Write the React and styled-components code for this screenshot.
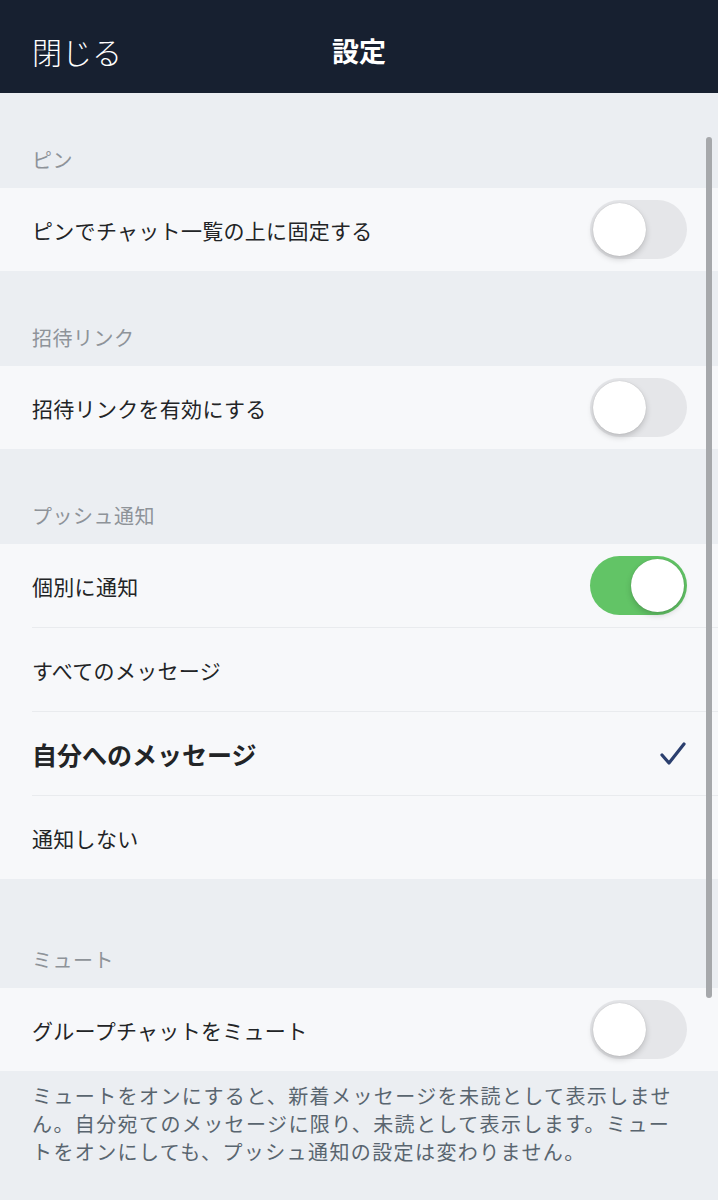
import React, { useState } from 'react';
import styled, { createGlobalStyle } from 'styled-components';

const GlobalStyle = createGlobalStyle`
    html, body {
        margin: 0;
        padding: 0;
        background: #ebeef2;
    }
    body {
        font-family: "Noto Sans CJK JP", "Noto Sans", sans-serif;
        -webkit-font-smoothing: antialiased;
    }
`;

export const Page = styled.div`
    position: relative;
    width: 718px;
    min-height: 1200px;
    background: #ebeef2;
    overflow: hidden;
`;

export const Header = styled.header`
    display: grid;
    grid-template-columns: 1fr auto 1fr;
    align-items: center;
    height: 93px;
    box-sizing: border-box;
    padding: 8px 32px 0;
    background: #172030;
    color: #ffffff;
`;

export const CloseButton = styled.button`
    justify-self: start;
    padding: 0;
    border: none;
    background: none;
    color: #ffffff;
    font-family: inherit;
    font-size: 30px;
    font-weight: 300;
    cursor: pointer;
`;

export const Title = styled.h1`
    margin: 0;
    font-size: 27px;
    font-weight: 700;
`;

export const SectionHeader = styled.div`
    display: flex;
    align-items: flex-end;
    height: ${(p) => p.height || 95}px;
    box-sizing: border-box;
    padding: 0 32px 14px;
    color: #8e9399;
    font-size: 20px;
    line-height: 28px;
    letter-spacing: 0.5px;
`;

export const Group = styled.div`
    background: #f7f8fa;
`;

export const Row = styled.div`
    display: flex;
    align-items: center;
    justify-content: space-between;
    height: 83px;
    margin-left: 32px;
    padding-right: 31px;
    border-top: ${(p) => (p.divided ? '1px solid #e9ebee' : 'none')};
`;

export const Label = styled.span`
    color: #222426;
    font-size: ${(p) => (p.selected ? 25 : 21)}px;
    font-weight: ${(p) => (p.selected ? 700 : 400)};
    letter-spacing: ${(p) => (p.selected ? 0 : 0.3)}px;
`;

export const Track = styled.button`
    position: relative;
    width: 97px;
    height: 59px;
    padding: 0;
    border: none;
    border-radius: 30px;
    background: ${(p) => (p.on ? '#62c466' : '#e5e6e9')};
    cursor: pointer;
`;

export const Knob = styled.span`
    position: absolute;
    top: 3px;
    left: ${(p) => (p.on ? 41 : 3)}px;
    width: 53px;
    height: 53px;
    border-radius: 50%;
    background: #ffffff;
    box-shadow: 0 3px 6px rgba(0, 0, 0, 0.18), 0 0 1px rgba(0, 0, 0, 0.2);
`;

export const Note = styled.p`
    margin: 0;
    padding: 11px 32px 40px;
    color: #59656f;
    font-size: 20px;
    line-height: 28px;
    letter-spacing: 1.4px;
`;

export const ScrollBar = styled.div`
    position: absolute;
    top: 137px;
    right: 6px;
    width: 6px;
    height: 861px;
    border-radius: 3px;
    background: #a6a8ab;
`;

const Toggle = ({ on, onClick }) => (
    <Track on={on ? 1 : 0} onClick={onClick}>
        <Knob on={on ? 1 : 0} />
    </Track>
);

const Check = () => (
    <svg width="28" height="26" viewBox="0 0 28 26">
        <path d="M3 14 L10 22 L25 3" fill="none" stroke="#2b3f6e" strokeWidth="3.2" strokeLinecap="round" strokeLinejoin="round" />
    </svg>
);

const App = () => {
    const [pin, setPin] = useState(false);
    const [invite, setInvite] = useState(false);
    const [notify, setNotify] = useState(true);
    const [mute, setMute] = useState(false);
    const [mode, setMode] = useState('mine');

    const modes = [
        { id: 'all', label: 'すべてのメッセージ' },
        { id: 'mine', label: '自分へのメッセージ' },
        { id: 'none', label: '通知しない' },
    ];

    return (
        <Page>
            <GlobalStyle />
            <Header>
                <CloseButton>閉じる</CloseButton>
                <Title>設定</Title>
                <span />
            </Header>

            <SectionHeader>ピン</SectionHeader>
            <Group>
                <Row>
                    <Label>ピンでチャット一覧の上に固定する</Label>
                    <Toggle on={pin} onClick={() => setPin(!pin)} />
                </Row>
            </Group>

            <SectionHeader>招待リンク</SectionHeader>
            <Group>
                <Row>
                    <Label>招待リンクを有効にする</Label>
                    <Toggle on={invite} onClick={() => setInvite(!invite)} />
                </Row>
            </Group>

            <SectionHeader>プッシュ通知</SectionHeader>
            <Group>
                <Row>
                    <Label>個別に通知</Label>
                    <Toggle on={notify} onClick={() => setNotify(!notify)} />
                </Row>
                {modes.map((m) => (
                    <Row key={m.id} divided onClick={() => setMode(m.id)}>
                        <Label selected={mode === m.id}>{m.label}</Label>
                        {mode === m.id && <Check />}
                    </Row>
                ))}
            </Group>

            <SectionHeader height={109}>ミュート</SectionHeader>
            <Group>
                <Row>
                    <Label>グループチャットをミュート</Label>
                    <Toggle on={mute} onClick={() => setMute(!mute)} />
                </Row>
            </Group>
            <Note>
                ミュートをオンにすると、新着メッセージを未読として表示しません。自分宛てのメッセージに限り、未読として表示します。ミュートをオンにしても、プッシュ通知の設定は変わりません。
            </Note>

            <ScrollBar />
        </Page>
    );
};

export default App;
